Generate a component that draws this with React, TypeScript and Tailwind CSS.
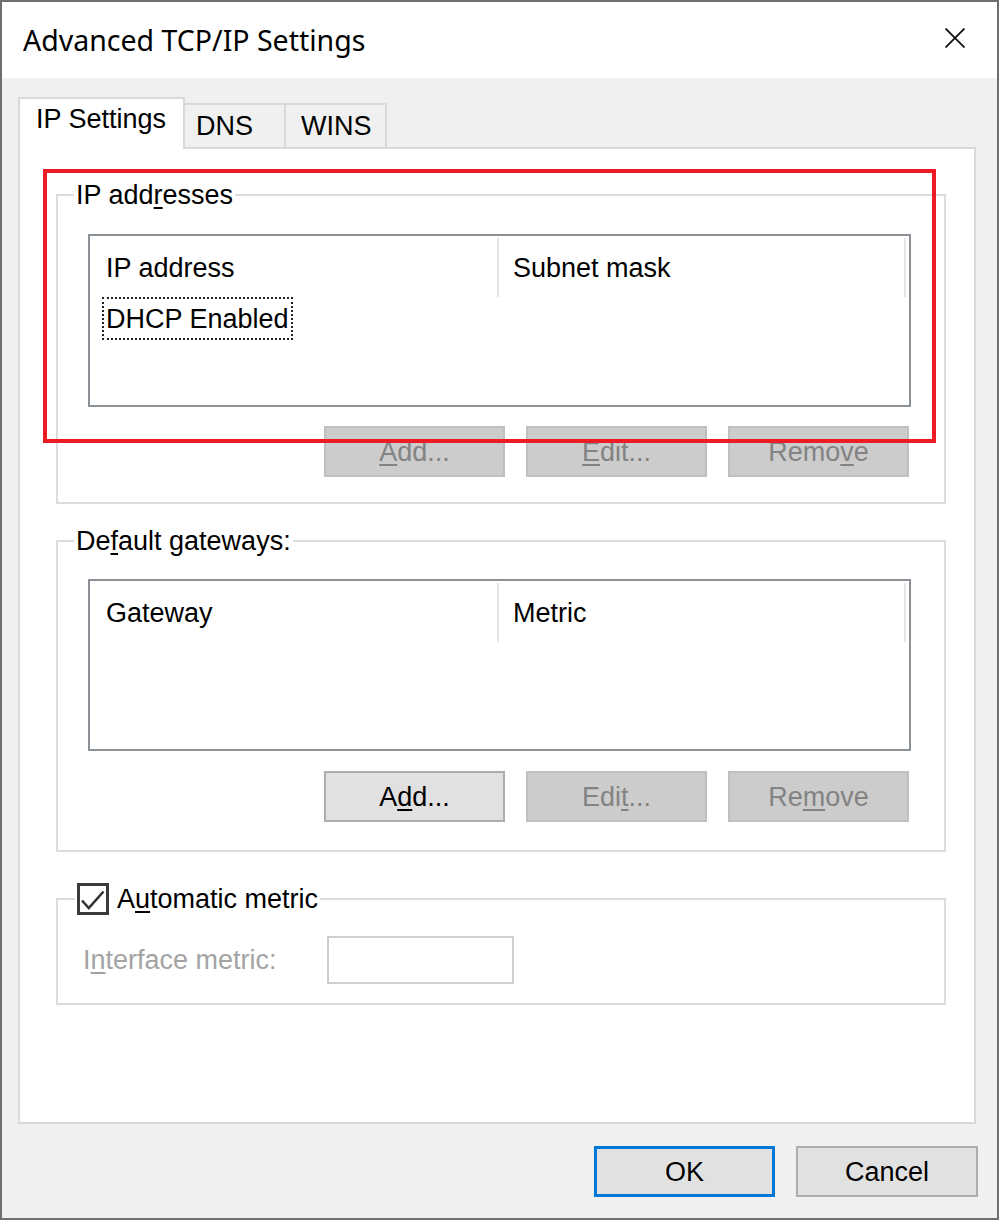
import React from "react";

const BODY = "font-['Liberation_Sans',Arial,sans-serif] text-[27px] leading-[30px]";

function Btn({ children, disabled }: { children: React.ReactNode; disabled?: boolean }) {
  return (
    <div
      className={
        disabled
          ? "flex h-[51px] w-[181px] items-center justify-center border-2 border-[#bfbfbf] bg-[#cccccc] text-[#838383]"
          : "flex h-[51px] w-[181px] items-center justify-center border-2 border-[#adadad] bg-[#e1e1e1] text-black"
      }
    >
      <span>{children}</span>
    </div>
  );
}

function U({ children }: { children: React.ReactNode }) {
  return <span className="underline decoration-2 underline-offset-[3px]">{children}</span>;
}

function ListView({ c1, c2, row }: { c1: string; c2: string; row?: string }) {
  return (
    <div className="flex h-[173px] flex-col border-2 border-[#8c9097] bg-white">
      <div className="flex h-[61px] shrink-0">
        <div className="mt-[2px] h-[59px] w-[409px] border-r-2 border-[#e5e5e5] pl-[16px] pt-[15px]">{c1}</div>
        <div className="mt-[2px] h-[59px] w-[407px] border-r-2 border-[#e5e5e5] pl-[14px] pt-[15px]">{c2}</div>
      </div>
      {row && (
        <div className="ml-[12px] self-start border-2 border-dotted border-[#222] px-[2px] pt-[5px] pb-[4px]">
          {row}
        </div>
      )}
    </div>
  );
}

export default function App() {
  return (
    <div className={"relative flex h-[1220px] w-[999px] flex-col border-2 border-[#6f6f6f] bg-[#f0f0f0] text-black " + BODY}>
      {/* Title bar */}
      <div className="flex h-[76px] shrink-0 items-start justify-between bg-white">
        <div className="pl-[21px] pt-[19px] font-['Noto_Sans',sans-serif] text-[28.5px] leading-[38px]">
          Advanced TCP/IP Settings
        </div>
        <svg className="mr-[32px] mt-[26px]" width="20" height="20" viewBox="0 0 20 20">
          <path d="M0.5 0.5 L19.5 19.5 M19.5 0.5 L0.5 19.5" stroke="#111" strokeWidth="1.8" fill="none" />
        </svg>
      </div>

      {/* Body */}
      <div className="flex flex-1 flex-col pl-[16px] pr-[19px] pt-[19px]">
        {/* Tabs */}
        <div className="flex items-end">
          <div className="relative z-10 -mb-[2px] h-[52px] w-[167px] border-2 border-b-0 border-[#d9d9d9] bg-white pl-[16px] pt-[5px]">
            IP Settings
          </div>
          <div className="h-[44px] w-[101px] border-t-2 border-r-2 border-[#d9d9d9] bg-[#f0f0f0] pl-[11px] pt-[6px]">
            DNS
          </div>
          <div className="h-[44px] w-[101px] border-t-2 border-r-2 border-[#d9d9d9] bg-[#f0f0f0] pl-[15px] pt-[6px]">
            WINS
          </div>
        </div>

        {/* Panel */}
        <div className="flex h-[977px] w-[958px] flex-col border-2 border-[#d9d9d9] bg-white pl-[36px] pr-[28px] pt-[45px]">
          {/* IP addresses */}
          <div className="relative border-2 border-[#dcdcdc]">
            <span className="absolute left-[16px] top-[-16px] bg-white px-[2px]">
              IP add<U>r</U>esses
            </span>
            <div className="flex flex-col pl-[30px] pr-[33px] pt-[38px] pb-[25px]">
              <ListView c1="IP address" c2="Subnet mask" row="DHCP Enabled" />
              <div className="mr-[2px] mt-[19px] flex justify-end gap-[21px]">
                <Btn disabled><U>A</U>dd...</Btn>
                <Btn disabled><U>E</U>dit...</Btn>
                <Btn disabled>Remo<U>v</U>e</Btn>
              </div>
            </div>
          </div>

          {/* Default gateways */}
          <div className="relative mt-[36px] border-2 border-[#dcdcdc]">
            <span className="absolute left-[16px] top-[-16px] bg-white px-[2px]">
              De<U>f</U>ault gateways:
            </span>
            <div className="flex flex-col pl-[30px] pr-[33px] pt-[37px] pb-[28px]">
              <div className="h-[172px]">
                <div className="h-[172px] [&>div]:h-[172px]">
                  <ListView c1="Gateway" c2="Metric" />
                </div>
              </div>
              <div className="mr-[2px] mt-[20px] flex justify-end gap-[21px]">
                <Btn>A<U>d</U>d...</Btn>
                <Btn disabled>Edi<U>t</U>...</Btn>
                <Btn disabled>Re<U>m</U>ove</Btn>
              </div>
            </div>
          </div>

          {/* Automatic metric */}
          <div className="relative mt-[46px] border-2 border-[#dcdcdc]">
            <div className="absolute left-[17px] top-[-17px] flex h-[32px] items-center gap-[8px] bg-white px-[2px]">
              <div className="h-[32px] w-[32px] border-[3px] border-[#3a3a3a] bg-white">
                <svg width="26" height="26" viewBox="0 0 26 26">
                  <path d="M2 14.5 L8.8 22 L23.5 5.5" stroke="#333" strokeWidth="2.6" fill="none" />
                </svg>
              </div>
              <span>
                A<U>u</U>tomatic metric
              </span>
            </div>
            <div className="flex items-center pl-[25px] pt-[36px] pb-[19px]">
              <div className="w-[244px] text-[#a3a3a3]">
                I<U>n</U>terface metric:
              </div>
              <div className="h-[48px] w-[187px] border-2 border-[#cfcfcf] bg-white" />
            </div>
          </div>
        </div>

        {/* Bottom buttons */}
        <div className="mt-[22px] flex justify-end gap-[21px]">
          <div className="flex h-[51px] w-[181px] items-center justify-center border-[3px] border-[#0078d7] bg-[#e1e1e1]">
            OK
          </div>
          <div className="flex h-[51px] w-[182px] items-center justify-center border-2 border-[#adadad] bg-[#e1e1e1]">
            Cancel
          </div>
        </div>
      </div>

      {/* Red annotation rectangle */}
      <div className="pointer-events-none absolute left-[41px] top-[167px] h-[274px] w-[893px] border-4 border-[#ed1c24]" />
    </div>
  );
}
